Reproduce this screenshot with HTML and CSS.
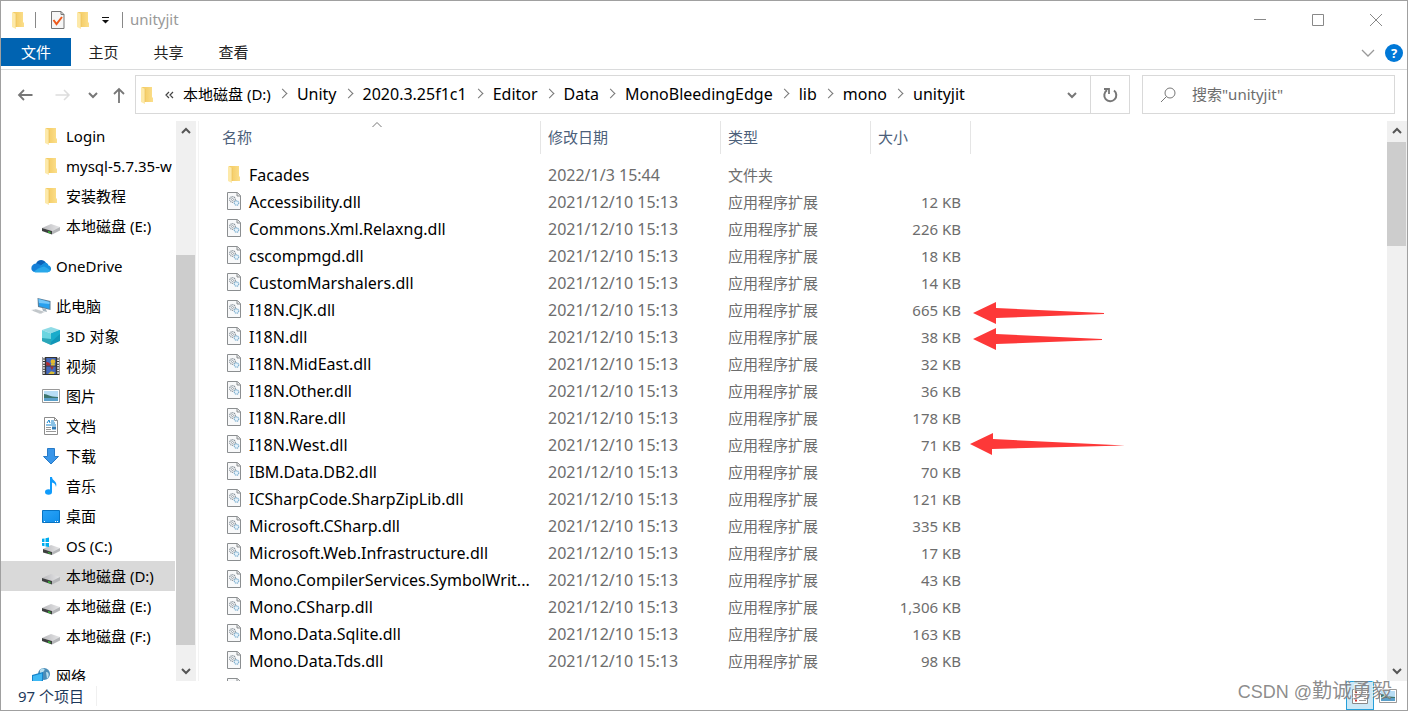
FILE: index.html
```html
<!DOCTYPE html>
<html lang="zh-CN">
<head>
<meta charset="utf-8">
<title>unityjit</title>
<link rel="stylesheet" href="styles.css">
</head>
<body>
<svg class="defs" aria-hidden="true">
  <defs>
    <linearGradient id="gold" x1="0" x2="1"><stop offset="0" stop-color="#f3cb62"/><stop offset=".5" stop-color="#f7d374"/><stop offset="1" stop-color="#fbdf8c"/></linearGradient>
    <linearGradient id="blue" x1="0" y1="0" x2="1" y2="1"><stop offset="0" stop-color="#2ba4f8"/><stop offset="1" stop-color="#0f8eea"/></linearGradient>
    <linearGradient id="silver" x1="0" x2="1"><stop offset="0" stop-color="#b9b9bc"/><stop offset="1" stop-color="#e6e6e8"/></linearGradient>
  </defs>
  <symbol id="folder" viewBox="0 0 18 18"><path d="M4 1h10v10l1 1v4H6z" fill="url(#gold)"/><path d="M3 1l4 2v15l-4-2z" fill="#fde9a9"/><path d="M7 3v13" stroke="#e9bd52" stroke-width=".6"/></symbol>
  <symbol id="dll" viewBox="0 0 18 18"><path d="M2.500 .5h10l3 3v14h-13z" fill="#f8f9fa" stroke="#8b8e90"/><path d="M12 .5v3.500h3.500" fill="#e4e6e8" stroke="#8b8e90"/><circle cx="7.500" cy="7.500" r="2.800" fill="none" stroke="#8a949c" stroke-width="1.200" stroke-dasharray="1.200 .6"/><circle cx="7.500" cy="7.500" r="1" fill="none" stroke="#8a949c" stroke-width=".8"/><circle cx="11.500" cy="11" r="2.200" fill="#e6f2fa" stroke="#7fb0d0" stroke-width="1.200" stroke-dasharray="1.200 .5"/></symbol>
  <symbol id="drive" viewBox="0 0 18 18"><path d="M0 11l9-4 9 3-8 4z" fill="url(#silver)"/><path d="M0 11l10 3v3.500L0 14z" fill="#3d3f3f"/><path d="M10 14l8-4v3.500l-8 4z" fill="#b5b6b9"/><path d="M6 14l2.500 1v1.500l-2.500-1z" fill="#35c435"/></symbol>
  <symbol id="os" viewBox="0 0 18 18"><path d="M1 12l8-4 9 3-8 4z" fill="url(#silver)"/><path d="M1 12l9 3v3L1 15.500z" fill="#3d3f3f"/><path d="M10 15l8-4v3l-8 4z" fill="#b5b6b9"/><path d="M6 15l2.500 1v1l-2.500-1z" fill="#35c435"/><path d="M-1 2l3.500-.6V5H-1zM3.500 1.200L7 .5V5H3.500zM-1 6h3.500v3.200L-1 8.700zM3.500 6H7v4l-3.500-.6z" fill="#00adef"/></symbol>
  <symbol id="cloud" viewBox="0 0 20 14"><path d="M5 5C6 1 12-1 15 4c-3 1-6 4-10 5z" fill="#0a62b9"/><path d="M4 13C-1 13-1 5 5 4.500c3 0 5 2 8 3.500l4 5z" fill="#1580d8"/><path d="M13 4c3-1 4 1 4.500 2.500C21 7 21 13 17 13h-5L8 8z" fill="#1490df"/><path d="M3 12.500C6 10 10 8 13 7.500c3 1 5 3 6 4-1 1.500-2 2-3 2H5c-1 0-1.500-.3-2-1z" fill="#29a8ea"/></symbol>
  <symbol id="pc" viewBox="0 0 20 18"><path d="M6.500 1l13 3v9l-12.500-3z" fill="#5d7f99"/><path d="M7.500 2l11 3v7l-10.500-3z" fill="#28a0ee"/><path d="M7.500 2l11 3v2L8 6z" fill="#74c7fa"/><path d="M11 11l4 1 1 3-4-1z" fill="#a7b4bd"/><path d="M0 13l5-1 9 3-5 2z" fill="#d3d7da"/><path d="M2 13.500l9 2.500M4 13l8 2" stroke="#aab0b5" stroke-width=".5"/></symbol>
  <symbol id="cube" viewBox="0 0 18 18"><path d="M9 0l9 3-9 3.500L0 3z" fill="#8fdbe6"/><path d="M0 3l9 3.500V18l-9-4z" fill="#6bd5e0"/><path d="M18 3L9 6.500V18l9-4z" fill="#1196b8"/><path d="M9 6.500L18 3v4L9 15z" fill="#1aaccb"/><path d="M0 11l9 1v6l-9-4z" fill="#2aa6b8"/></symbol>
  <symbol id="film" viewBox="0 0 18 19"><path d="M0 0h18v19H0z" fill="#333"/><path d="M1.500 0v19M16.500 0v19" stroke="#f1f1f1" stroke-width="2" stroke-dasharray="1.600 1.100"/><path d="M4 1h10v8H4zM4 10h10v8H4z" fill="#4368bd"/><path d="M4 5l3 1 2 3H4z" fill="#b72c2c"/><circle cx="11" cy="5" r="2.500" fill="#e3b92e"/><path d="M6 18l3-3 4 1-1 2zM9 7h4v2H9z" fill="#d9bd36"/><path d="M8 10h4l-2 4z" fill="#a7372c"/></symbol>
  <symbol id="picture" viewBox="0 0 18 18"><path d="M.5 2.500h17v13H.5z" fill="#fff" stroke="#999"/><path d="M2 4h14v10H2z" fill="#b7ddf5"/><path d="M2 7c4 0 5 3 14 3v2H2z" fill="#3c756e"/><path d="M2 11h14v3H2z" fill="#5aa0ca"/></symbol>
  <symbol id="document" viewBox="0 0 18 18"><path d="M2.500.5h10l3 3v14h-13z" fill="#fff" stroke="#8c8c8c"/><path d="M12.500.5v3h3" fill="none" stroke="#8c8c8c"/><path d="M5 6l2-3 1 3M9 4h3M9 6h4M4 8h10" stroke="#1684cc" fill="none"/><path d="M4 10.500h5M4 12.500h5M4 14.500h10" stroke="#999"/><path d="M10 9.500h4v3h-4z" fill="#347cb5"/></symbol>
  <symbol id="down" viewBox="0 0 18 18"><path d="M5.500 1.500h7v8h4l-7.500 7.500L1.500 9.500h4z" fill="#3a96e9" stroke="#277ac7"/></symbol>
  <symbol id="music" viewBox="0 0 18 18"><ellipse cx="6.500" cy="15" rx="3.500" ry="2.800" fill="#109bfb"/><path d="M8 0h2c0 4 6 4 4 10-.5-3-2-4-4-4.500V15H8z" fill="#109bfb"/></symbol>
  <symbol id="desktop" viewBox="0 0 18 18"><path d="M.5 3.500h17v12H.5z" fill="url(#blue)" stroke="#0873c2"/><path d="M2 14.500h1M13 14.500h1M15 14.500h1" stroke="#fff"/></symbol>
  <symbol id="network" viewBox="0 0 20 18"><circle cx="13" cy="7" r="6" fill="#4a8db8"/><path d="M9 3c3-3 6-1 4 1s-3 3-4 2zM15 5c4 0 3 5 1 7z" fill="#b7deee"/><path d="M1 8l11-3v9L1 17z" fill="#1684ca"/><path d="M2 9l9-2.500v7L2 16z" fill="#3db8f4"/></symbol>
  <symbol id="chev" viewBox="0 0 12 12"><path d="M2 4l4 4 4-4" fill="none" stroke="currentColor" stroke-width="2"/></symbol>
</svg>

<div class="window">
  <header class="titlebar">
    <svg class="ic"><use href="#folder"/></svg><i class="bar first"></i>
    <button class="plain" aria-label="属性"><svg class="ic" viewBox="0 0 18 18"><path d="M2.500.5h9.500l3 3v14H2.500z" fill="#f6f6f6" stroke="#777"/><path d="M12 .5v3h3" fill="none" stroke="#777"/><path d="M4.500 9l3 4L13 6" fill="none" stroke="#ee5a1c" stroke-width="2"/></svg></button>
    <button class="plain newf" aria-label="新建文件夹"><svg class="ic"><use href="#folder"/></svg></button>
    <button class="plain" aria-label="自定义快速访问工具栏"><svg class="qa" viewBox="0 0 8 8"><path d="M1 1.500h7" stroke="#111"/><path d="M1 4h7l-3.500 3.500z" fill="#111"/></svg></button>
    <i class="bar"></i><h1>unityjit</h1>
    <div class="controls">
      <button class="plain" aria-label="最小化"><svg viewBox="0 0 14 14"><path d="M1 6.500h12" stroke="#888"/></svg></button>
      <button class="plain" aria-label="最大化"><svg viewBox="0 0 14 14"><path d="M1.500 1.500h11v11h-11z" fill="none" stroke="#888"/></svg></button>
      <button class="plain" aria-label="关闭"><svg viewBox="0 0 14 14"><path d="M1 1l12 12M13 1L1 13" stroke="#888"/></svg></button>
    </div>
  </header>
  <nav class="tabs">
    <button class="tab active">文件</button><button class="tab">主页</button><button class="tab">共享</button><button class="tab">查看</button>
    <button class="plain expand" aria-label="展开功能区"><svg viewBox="0 0 14 10"><path d="M1 2l6 6 6-6" fill="none" stroke="#999" stroke-width="1.300"/></svg></button>
    <button class="help" aria-label="帮助">?</button>
  </nav>
  <div class="addressrow">
    <button class="plain back" aria-label="返回"><svg viewBox="0 0 16 16"><path d="M15.500 8H2M7 3L2 8l5 5" fill="none" stroke="#777" stroke-width="1.800"/></svg></button>
    <button class="plain fwd" aria-label="前进"><svg viewBox="0 0 16 16"><path d="M.5 8H14M9 3l5 5-5 5" fill="none" stroke="#ddd" stroke-width="1.500"/></svg></button>
    <button class="plain recent" aria-label="最近位置"><svg viewBox="0 0 12 12"><use href="#chev"/></svg></button>
    <button class="plain up" aria-label="向上"><svg viewBox="0 0 16 16"><path d="M8 16V2M3 7l5-5 5 5" fill="none" stroke="#777" stroke-width="1.800"/></svg></button>
    <div class="address">
      <svg class="ic"><use href="#folder"/></svg><svg class="more" viewBox="0 0 8 8"><path d="M4 1L1 4l3 3M8 1L5 4l3 3" fill="none" stroke="#444" stroke-width="1.200"/></svg>
      <ol class="crumbs"><li><a href="#">本地磁盘 (D:)</a></li><li><a href="#">Unity</a></li><li><a href="#">2020.3.25f1c1</a></li><li><a href="#">Editor</a></li><li><a href="#">Data</a></li><li><a href="#">MonoBleedingEdge</a></li><li><a href="#">lib</a></li><li><a href="#">mono</a></li><li><a href="#">unityjit</a></li></ol>
      <button class="plain drop" aria-label="历史记录"><svg viewBox="0 0 12 12"><use href="#chev"/></svg></button>
      <button class="plain refresh" aria-label="刷新"><svg viewBox="0 0 16 16"><path d="M5 3.200A6 6 0 1 0 12 3.500" fill="none" stroke="#777" stroke-width="2"/><path d="M2 2h5v5" fill="none" stroke="#777" stroke-width="1.800"/></svg></button>
    </div>
    <label class="search"><svg viewBox="0 0 16 16"><circle cx="10" cy="6" r="5" fill="none" stroke="#777"/><path d="M6.500 9.500L1 15" stroke="#777"/></svg><input type="text" placeholder="搜索&quot;unityjit&quot;" aria-label="搜索"></label>
  </div>
  <div class="body">
    <nav class="tree">
      <a href="#" class="sub"><svg class="ic"><use href="#folder"/></svg>Login</a>
      <a href="#" class="sub"><svg class="ic"><use href="#folder"/></svg>mysql-5.7.35-w</a>
      <a href="#" class="sub"><svg class="ic"><use href="#folder"/></svg>安装教程</a>
      <a href="#" class="sub"><svg class="ic"><use href="#drive"/></svg>本地磁盘 (E:)</a>
      <a href="#" class="root"><svg class="ic"><use href="#cloud"/></svg>OneDrive</a>
      <a href="#" class="root"><svg class="ic"><use href="#pc"/></svg>此电脑</a>
      <a href="#" class="sub"><svg class="ic"><use href="#cube"/></svg>3D 对象</a>
      <a href="#" class="sub"><svg class="ic"><use href="#film"/></svg>视频</a>
      <a href="#" class="sub"><svg class="ic"><use href="#picture"/></svg>图片</a>
      <a href="#" class="sub"><svg class="ic"><use href="#document"/></svg>文档</a>
      <a href="#" class="sub"><svg class="ic"><use href="#down"/></svg>下载</a>
      <a href="#" class="sub"><svg class="ic"><use href="#music"/></svg>音乐</a>
      <a href="#" class="sub"><svg class="ic"><use href="#desktop"/></svg>桌面</a>
      <a href="#" class="sub"><svg class="ic"><use href="#os"/></svg>OS (C:)</a>
      <a href="#" class="sub selected"><svg class="ic"><use href="#drive"/></svg>本地磁盘 (D:)</a>
      <a href="#" class="sub"><svg class="ic"><use href="#drive"/></svg>本地磁盘 (E:)</a>
      <a href="#" class="sub"><svg class="ic"><use href="#drive"/></svg>本地磁盘 (F:)</a>
      <a href="#" class="root"><svg class="ic"><use href="#network"/></svg>网络</a>
    </nav>
    <div class="scroll treescroll"><svg class="flip"><use href="#chev" y="4" width="12" height="12"/></svg><div class="track"><div class="thumb"></div></div><svg><use href="#chev" y="4" width="12" height="12"/></svg></div>
    <main class="files">
      <table>
        <colgroup><col class="c1"><col class="c2"><col class="c3"><col class="c4"></colgroup>
        <thead><tr><th><div>名称<svg class="sort" viewBox="0 0 12 8"><path d="M1.500 6L6 1.500 10.500 6" fill="none" stroke="#777"/></svg></div></th><th><div>修改日期</div></th><th><div>类型</div></th><th><div>大小</div></th></tr></thead>
        <tbody>
          <tr><td><svg class="ic"><use href="#folder"/></svg>Facades</td><td>2022/1/3 15:44</td><td>文件夹</td><td></td></tr>
          <tr><td><svg class="ic"><use href="#dll"/></svg>Accessibility.dll</td><td>2021/12/10 15:13</td><td>应用程序扩展</td><td>12 KB</td></tr>
          <tr><td><svg class="ic"><use href="#dll"/></svg>Commons.Xml.Relaxng.dll</td><td>2021/12/10 15:13</td><td>应用程序扩展</td><td>226 KB</td></tr>
          <tr><td><svg class="ic"><use href="#dll"/></svg>cscompmgd.dll</td><td>2021/12/10 15:13</td><td>应用程序扩展</td><td>18 KB</td></tr>
          <tr><td><svg class="ic"><use href="#dll"/></svg>CustomMarshalers.dll</td><td>2021/12/10 15:13</td><td>应用程序扩展</td><td>14 KB</td></tr>
          <tr><td><svg class="ic"><use href="#dll"/></svg>I18N.CJK.dll</td><td>2021/12/10 15:13</td><td>应用程序扩展</td><td>665 KB</td></tr>
          <tr><td><svg class="ic"><use href="#dll"/></svg>I18N.dll</td><td>2021/12/10 15:13</td><td>应用程序扩展</td><td>38 KB</td></tr>
          <tr><td><svg class="ic"><use href="#dll"/></svg>I18N.MidEast.dll</td><td>2021/12/10 15:13</td><td>应用程序扩展</td><td>32 KB</td></tr>
          <tr><td><svg class="ic"><use href="#dll"/></svg>I18N.Other.dll</td><td>2021/12/10 15:13</td><td>应用程序扩展</td><td>36 KB</td></tr>
          <tr><td><svg class="ic"><use href="#dll"/></svg>I18N.Rare.dll</td><td>2021/12/10 15:13</td><td>应用程序扩展</td><td>178 KB</td></tr>
          <tr><td><svg class="ic"><use href="#dll"/></svg>I18N.West.dll</td><td>2021/12/10 15:13</td><td>应用程序扩展</td><td>71 KB</td></tr>
          <tr><td><svg class="ic"><use href="#dll"/></svg>IBM.Data.DB2.dll</td><td>2021/12/10 15:13</td><td>应用程序扩展</td><td>70 KB</td></tr>
          <tr><td><svg class="ic"><use href="#dll"/></svg>ICSharpCode.SharpZipLib.dll</td><td>2021/12/10 15:13</td><td>应用程序扩展</td><td>121 KB</td></tr>
          <tr><td><svg class="ic"><use href="#dll"/></svg>Microsoft.CSharp.dll</td><td>2021/12/10 15:13</td><td>应用程序扩展</td><td>335 KB</td></tr>
          <tr><td><svg class="ic"><use href="#dll"/></svg>Microsoft.Web.Infrastructure.dll</td><td>2021/12/10 15:13</td><td>应用程序扩展</td><td>17 KB</td></tr>
          <tr><td><svg class="ic"><use href="#dll"/></svg>Mono.CompilerServices.SymbolWrit...</td><td>2021/12/10 15:13</td><td>应用程序扩展</td><td>43 KB</td></tr>
          <tr><td><svg class="ic"><use href="#dll"/></svg>Mono.CSharp.dll</td><td>2021/12/10 15:13</td><td>应用程序扩展</td><td>1,306 KB</td></tr>
          <tr><td><svg class="ic"><use href="#dll"/></svg>Mono.Data.Sqlite.dll</td><td>2021/12/10 15:13</td><td>应用程序扩展</td><td>163 KB</td></tr>
          <tr><td><svg class="ic"><use href="#dll"/></svg>Mono.Data.Tds.dll</td><td>2021/12/10 15:13</td><td>应用程序扩展</td><td>98 KB</td></tr>
          <tr><td><svg class="ic"><use href="#dll"/></svg></td><td></td><td></td><td></td></tr>
        </tbody>
      </table>
      <svg class="arrows" viewBox="0 0 160 160" aria-hidden="true"><g fill="#fd3838"><path d="M3 13L26 2v6l108 5v1L26 18v6z"/><path d="M3 39L26 28v6l106 5v1L26 44v6z"/><path d="M0 144l23-11v6l132 6.500L22 149v6z"/></g></svg>
    </main>
    <div class="scroll filescroll"><svg class="flip"><use href="#chev" y="4" width="12" height="12"/></svg><div class="track"><div class="thumb"></div></div><svg><use href="#chev" y="4" width="12" height="12"/></svg></div>
  </div>
  <footer class="status"><span>97 个项目</span>
    <div class="views">
      <button class="plain on" aria-label="详细信息"><svg viewBox="0 0 18 18"><path d="M1.500 2.500h15v14h-15z" fill="#fff" stroke="#888"/><path d="M4 5.500h2M4 9.500h2M4 13.500h2" stroke="#c33" stroke-width="2"/><path d="M8 5.500h7M8 9.500h7M8 13.500h7" stroke="#999"/></svg></button>
      <button class="plain" aria-label="大图标"><svg viewBox="0 0 18 18"><use href="#picture"/></svg></button>
    </div>
    <span class="mark">CSDN @<b>勤诚勇毅</b></span>
  </footer>
</div>
</body>
</html>
```
FILE: styles.css
```css
* { box-sizing: border-box; }
body { margin: 0; font: 15px/20px "Noto Sans", "Noto Sans CJK SC", sans-serif; color: #000; background: #fff; }
svg { display: block; flex: none; overflow: visible; }
a { color: inherit; text-decoration: none; }
button, input { font: inherit; }
.defs { position: absolute; width: 0; height: 0; }
.plain { border: 0; background: none; padding: 0; display: flex; align-items: center; justify-content: center; color: #777; }
.ic { width: 18px; height: 18px; }
.window { height: 100vh; display: flex; flex-direction: column; border: 1px solid #a0a0a0; overflow: hidden; }

.titlebar { height: 37px; flex: none; display: flex; align-items: center; padding: 0 2px 0 8px; }
.bar { width: 1px; height: 16px; background: #888; }
.bar.first { margin: 0 13px 0 8px; }
.newf { margin: 0 9px 0 7px; }
.qa { width: 8px; height: 8px; margin-right: 13px; }
h1 { margin: 0 0 0 7px; padding-bottom: 1px; font-size: 15px; font-weight: 400; color: #999; }
.controls { margin-left: auto; display: flex; }
.controls button { width: 58px; height: 35px; }
.controls svg { width: 14px; height: 14px; }

.tabs { height: 32px; flex: none; display: flex; align-items: flex-start; border-bottom: 1px solid #dadbdc; }
.tab { border: 0; background: none; padding: 0; width: 65px; height: 28px; color: #222; }
.tab.active { width: 70px; background: #0063b1; color: #fff; }
.expand { margin: 0 10px 0 auto; width: 14px; height: 30px; }
.expand svg { width: 14px; height: 10px; }
.help { width: 18px; height: 18px; margin: 6px 4px 0 0; padding: 0; border: 0; border-radius: 50%; background: #0078d7; color: #fff; font-size: 13px; font-weight: 700; line-height: 18px; }

.addressrow { height: 51px; flex: none; display: flex; align-items: flex-start; padding: 5px 12px 0 16px; }
.addressrow > button { height: 40px; }
.addressrow > button svg { width: 16px; height: 16px; }
.back, .fwd, .up { width: 16px; }
.fwd { margin: 0 16px 0 22px; }
.addressrow > .recent svg { width: 12px; height: 12px; }
.up { margin: 0 8px 0 12px; }
.address { flex: 1; min-width: 0; height: 39px; border: 1px solid #d9d9d9; display: flex; align-items: center; padding-left: 2px; }
.more { width: 8px; height: 8px; margin: 0 10px 0 9px; }
.crumbs { display: flex; list-style: none; margin: 0; padding: 0 0 2px; white-space: nowrap; flex: 1; font-size: 16px; }
.crumbs li { display: flex; align-items: center; }
.crumbs li:first-child { font-size: 15px; }
.crumbs li + li::before { content: ""; width: 6px; height: 6px; margin: 0 11px 0 8px; border: solid #777; border-width: 1px 1px 0 0; transform: rotate(45deg); }
.drop { width: 36px; height: 37px; }
.drop svg { width: 12px; height: 12px; }
.refresh { width: 39px; height: 37px; border-left: 1px solid #d9d9d9; }
.refresh svg { width: 16px; height: 16px; }
.search { width: 253px; height: 39px; margin-left: 12px; border: 1px solid #d9d9d9; display: flex; align-items: center; padding-left: 17px; }
.search svg { width: 16px; height: 16px; }
.search input { flex: 1; min-width: 0; border: 0; outline: 0; padding: 0 0 2px 16px; background: none; }
.search input::placeholder { color: #6d6d6d; opacity: 1; }

.body { flex: 1; min-height: 0; display: flex; }
.tree { width: 174px; flex: none; overflow: hidden; }
.tree a { height: 30px; display: flex; align-items: center; white-space: nowrap; }
.tree .sub { padding-left: 41px; }
.tree .sub .ic { margin-right: 6px; }
.tree .root { margin-top: 10px; padding-left: 30px; }
.tree .root .ic { width: 20px; margin-right: 5px; }
.tree .selected { background: #d9d9d9; }
.scroll { width: 20px; flex: none; padding-right: 1px; background: #f0f0f0; display: flex; flex-direction: column; align-items: center; color: #555; }
.scroll > svg { width: 12px; height: 20px; }
.flip { transform: rotate(180deg); }
.track { flex: 1; width: 100%; display: grid; }
.thumb { grid-row: 2; background: #cdcdcd; }
.treescroll { margin-left: 1px; }
.treescroll .track { grid-template-rows: 22% 75% 3%; }
.filescroll .track { grid-template-rows: 1px 20% 1fr; }
.files { flex: 1; min-width: 0; margin-left: 2px; border-left: 1px solid #f3f3f3; position: relative; overflow: hidden; }
table { border-collapse: collapse; table-layout: fixed; width: 772px; }
.c1 { width: 342px; }
.c2 { width: 180px; }
.c3 { width: 150px; }
.c4 { width: 100px; }
th { padding: 0 0 7px; font-weight: 400; text-align: left; color: #4c607a; }
th div { height: 33px; line-height: 33px; padding-left: 7px; border-right: 1px solid #e5e5e5; position: relative; }
th:first-child div { padding-left: 23px; }
.sort { position: absolute; left: 172px; top: 0; width: 12px; height: 8px; }
td { height: 27px; padding: 0 0 0 7px; color: #6d6d6d; white-space: nowrap; }
td:first-child { display: flex; align-items: center; gap: 6px; padding-left: 26px; color: #000; font-size: 16px; }
td:nth-child(2) { font-size: 16px; }
td .ic { margin-bottom: 2px; }
td:last-child { text-align: right; padding-right: 10px; }
.arrows { position: absolute; left: 771px; top: 179px; width: 160px; height: 160px; }

.status { height: 29px; flex: none; display: flex; align-items: center; justify-content: space-between; position: relative; padding: 0 5px 0 17px; color: #1e395b; }
.status > span:first-child { padding-right: 12px; border-right: 1px solid #f0f0f0; }
.views { display: flex; height: 29px; }
.views button { width: 28px; height: 29px; }
.views svg { width: 18px; height: 18px; }
.views .on { background: #cce8f6; border: 1px solid #26a0da; }
.mark { position: absolute; right: 15px; top: 0; font-family: "Liberation Sans", "Noto Sans CJK SC", sans-serif; font-size: 18px; color: rgba(120, 120, 120, .85); text-shadow: -1px -1px 0 rgba(255, 255, 255, .7); }
.mark b { font-weight: 400; font-size: 20px; }
```
